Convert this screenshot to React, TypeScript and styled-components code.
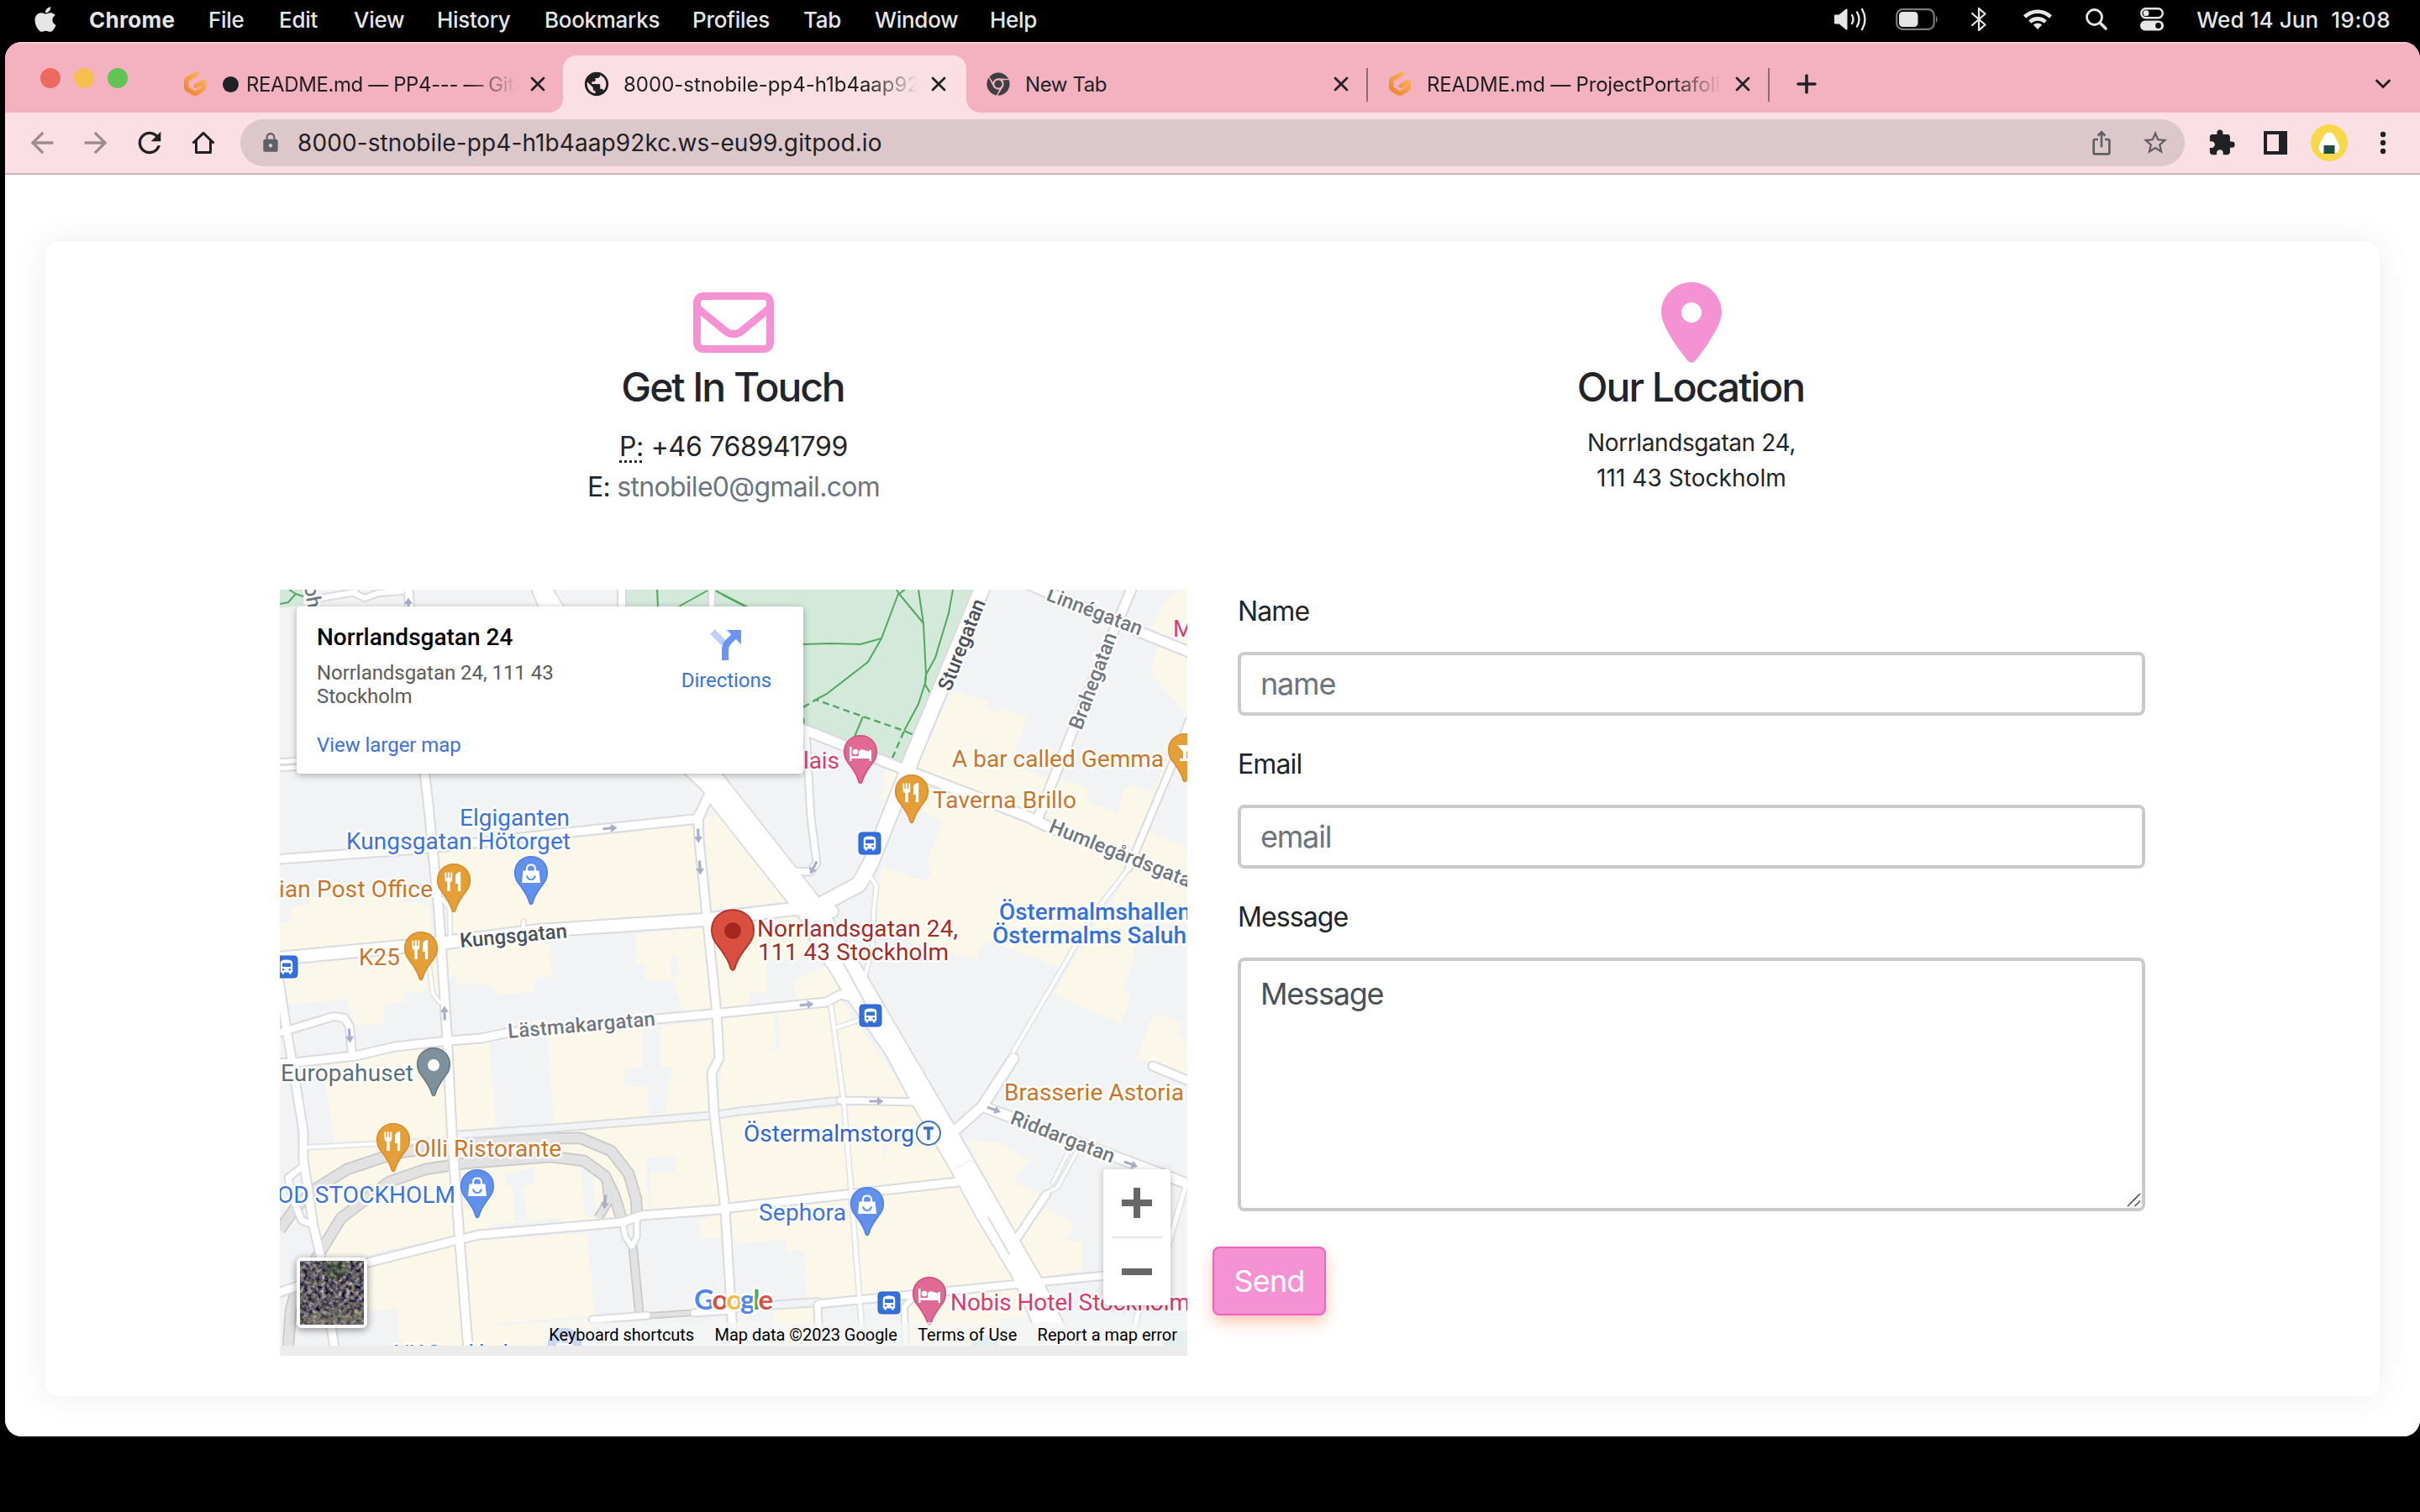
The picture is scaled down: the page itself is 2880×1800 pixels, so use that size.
import React from "react";
import styled, { createGlobalStyle } from "styled-components";
import { FaApple, FaChrome } from "react-icons/fa";
import { FaLocationDot, FaRegEnvelope } from "react-icons/fa6";
import {
  MdArrowBack,
  MdArrowForward,
  MdExtension,
  MdIosShare,
  MdLock,
  MdPublic,
  MdRefresh,
  MdStarBorder,
} from "react-icons/md";

const GlobalStyle = createGlobalStyle`
  *, *::before, *::after { box-sizing: border-box; }
  html, body { margin: 0; background: #000; }
  body { width: 2880px; height: 1800px; overflow: hidden; font-family: Inter, "Liberation Sans", sans-serif; color: #212529; }
  h2, p, address { margin: 0; font-style: normal; }
`;

/* ---------- menu bar ---------- */

const MenuBar = styled.header`
  display: flex;
  align-items: center;
  height: 50px;
  padding: 0 35px 4px 37px;
  color: #e6e6e6;
  font-size: 26px;
  font-weight: 500;
  letter-spacing: -0.3px;
  white-space: nowrap;
`;

const AppleMark = styled.span`
  display: flex;
  width: 69px;
`;

const MenuItem = styled.span<{ $w: number; $bold?: boolean }>`
  width: ${(p) => p.$w}px;
  font-weight: ${(p) => (p.$bold ? 700 : 500)};
  letter-spacing: ${(p) => (p.$bold ? "0.3px" : "-0.3px")};
`;

const StatusArea = styled.div`
  display: flex;
  align-items: center;
  margin-left: auto;
`;

const StatusSlot = styled.span<{ $w: number }>`
  display: flex;
  justify-content: center;
  width: ${(p) => p.$w}px;
`;

const Clock = styled.span`
  display: flex;
  gap: 15px;
  margin-left: 13px;
  letter-spacing: 0.1px;
`;

const Time = styled.span`
  letter-spacing: 0.5px;
`;

/* ---------- browser window ---------- */

const BrowserWindow = styled.section`
  margin-left: 6px;
  height: 1660px;
  display: flex;
  flex-direction: column;
  border-radius: 20px;
  overflow: hidden;
  background: #fff;
`;

const TabStrip = styled.div`
  display: flex;
  align-items: flex-end;
  height: 84px;
  background: #f4b1bf;
  box-shadow: inset 0 2px 0 #f8cdd5;
`;

const TrafficLights = styled.div`
  display: flex;
  gap: 16px;
  align-self: center;
  width: 188px;
  padding: 2px 0 0 42px;
`;

const Light = styled.span<{ $color: string }>`
  width: 24px;
  height: 24px;
  border-radius: 50%;
  background: ${(p) => p.$color};
`;

const Tab = styled.div<{ $active?: boolean; $w: number }>`
  position: relative;
  display: flex;
  align-items: center;
  width: ${(p) => p.$w}px;
  height: 68px;
  padding: ${(p) => (p.$active ? "0 24px 0 26px" : "0 21px 0 24px")};
  color: #202124;
  font-size: 24px;
  border-radius: 16px 16px 0 0;
  background: ${(p) => (p.$active ? "#fae0e5" : "transparent")};

  &::before,
  &::after {
    content: "";
    display: ${(p) => (p.$active ? "block" : "none")};
    position: absolute;
    bottom: 0;
    width: 16px;
    height: 16px;
  }
  &::before {
    left: -16px;
    background: radial-gradient(circle at 0 0, transparent 15.5px, #fae0e5 16px);
  }
  &::after {
    right: -16px;
    background: radial-gradient(circle at 100% 0, transparent 15.5px, #fae0e5 16px);
  }
`;

const TabIcon = styled.span`
  display: flex;
  justify-content: center;
  flex: none;
  width: 28px;
  margin-right: 18px;
`;

const TabTitle = styled.span<{ $fade?: boolean; $ls: number }>`
  display: flex;
  align-items: center;
  flex: 1;
  overflow: hidden;
  white-space: pre;
  letter-spacing: ${(p) => p.$ls}px;
  mask-image: ${(p) => (p.$fade ? "linear-gradient(90deg, #000 calc(100% - 58px), transparent 100%)" : "none")};
`;

const UnsavedDot = styled.i`
  flex: none;
  width: 19px;
  height: 19px;
  margin: 0 9px 0 1px;
  border-radius: 50%;
  background: #202124;
`;

const CloseSlot = styled.span`
  display: flex;
  flex: none;
  margin-left: 16px;
`;

const TabDivider = styled.span`
  flex: none;
  align-self: flex-end;
  width: 2px;
  height: 40px;
  margin-bottom: 13px;
  background: #8f6a72;
`;

const StripButton = styled.span<{ $w: number; $push?: boolean }>`
  display: flex;
  align-items: center;
  justify-content: center;
  width: ${(p) => p.$w}px;
  height: 68px;
  margin-left: ${(p) => (p.$push ? "auto" : "0")};
`;

const Toolbar = styled.div`
  display: flex;
  align-items: center;
  height: 74px;
  padding: 0 12px 0 12px;
  background: #fae0e5;
  border-bottom: 2px solid #cdb5ba;
  color: #202124;
`;

const ToolButton = styled.span<{ $muted?: boolean }>`
  display: flex;
  align-items: center;
  justify-content: center;
  width: 64px;
  flex: none;
  color: ${(p) => (p.$muted ? "#9c8c90" : "#202124")};
`;

const Omnibox = styled.div`
  display: flex;
  align-items: center;
  flex: 1;
  height: 56px;
  margin: 0 12px;
  padding: 0 18px 0 23px;
  border-radius: 28px;
  background: #dcc8cb;
  color: #5f6064;
`;

const Address = styled.span`
  flex: 1;
  margin-left: 19px;
  color: #202124;
  font-size: 28px;
  letter-spacing: 0.1px;
`;

const OmniAction = styled.span`
  display: flex;
  margin-left: 31px;
`;

const SidePanelGlyph = styled.i`
  width: 28px;
  height: 28px;
  border: 4px solid #202124;
  border-right-width: 10px;
`;

const Avatar = styled.span`
  display: flex;
  align-items: center;
  justify-content: center;
  width: 44px;
  height: 44px;
  border-radius: 50%;
  background: #f8d849;
`;

/* ---------- page ---------- */

const Viewport = styled.main`
  flex: 1;
  padding: 80px 48px 48px;
  background: #fff;
`;

const ContactCard = styled.div`
  height: 1374px;
  padding: 48px 279px 0;
  border-radius: 16px;
  background: #fff;
  box-shadow: 0 0 40px rgba(0, 0, 0, 0.08);
`;

const Columns = styled.div`
  display: grid;
  grid-template-columns: 1080px 1080px;
  gap: 60px;
`;

const InfoBlock = styled.div`
  display: flex;
  flex-direction: column;
  align-items: center;
  height: 366px;
  text-align: center;

  & > svg {
    color: #f592d4;
  }
`;

const BlockTitle = styled.h2`
  margin-bottom: 16px;
  padding-right: 2px;
  font-size: 48px;
  font-weight: 550;
  line-height: 58px;
  letter-spacing: -2.05px;
`;

const ContactLines = styled.div`
  padding-top: 1.6px;
`;

const ContactLine = styled.p<{ $ls: number }>`
  font-size: 32px;
  line-height: 48px;
  letter-spacing: ${(p) => p.$ls}px;
`;

const PhoneAbbr = styled.abbr`
  text-decoration: none;
  background: repeating-linear-gradient(90deg, #212529 0 3px, transparent 3px 6px) 0 100% / 100% 3px no-repeat;
`;

const Mail = styled.span`
  color: #6c757d;
`;

const AddressLine = styled.address<{ $ls: number }>`
  font-size: 28px;
  line-height: 42px;
  letter-spacing: ${(p) => p.$ls}px;
`;

/* ---------- map ---------- */

const MapFrame = styled.div`
  position: relative;
  width: 1080px;
  height: 912px;
  border-bottom: 12px solid #ececec;
  overflow: hidden;
  font-family: Roboto, "Liberation Sans", sans-serif;
`;

const MapCanvas = styled.svg`
  display: block;
`;

const PlaceCard = styled.div`
  position: absolute;
  left: 20px;
  top: 20px;
  display: flex;
  justify-content: space-between;
  width: 603px;
  height: 199px;
  padding: 19px 38px 0 24px;
  border-radius: 4px;
  background: #fff;
  box-shadow: 0 2px 8px rgba(0, 0, 0, 0.3);
  font-size: 24px;
`;

const PlaceName = styled.p`
  color: #000;
  font-size: 28px;
  font-weight: 500;
  line-height: 36px;
`;

const PlaceAddress = styled.p`
  width: 300px;
  margin-top: 10px;
  color: #5b5b5b;
  line-height: 28px;
  letter-spacing: -0.05px;
`;

const MapLink = styled.p<{ $gap: number }>`
  margin-top: ${(p) => p.$gap}px;
  color: #3a72df;
  line-height: 28px;
  letter-spacing: -0.05px;
`;

const DirectionsBox = styled.div`
  display: flex;
  flex-direction: column;
  align-items: center;
  padding-top: 7px;
`;

const ZoomControl = styled.div`
  position: absolute;
  left: 980px;
  top: 690px;
  display: flex;
  flex-direction: column;
  align-items: center;
  width: 80px;
  height: 162px;
  border-radius: 4px;
  background: #fff;
  box-shadow: 0 2px 8px rgba(0, 0, 0, 0.25);
`;

const ZoomButton = styled.span`
  display: flex;
  flex: 1;
  align-items: center;
  justify-content: center;
`;

const ZoomRule = styled.i`
  width: 60px;
  height: 2px;
  background: #e6e6e6;
`;

const SatelliteToggle = styled.div`
  position: absolute;
  left: 20px;
  top: 795px;
  width: 84px;
  height: 84px;
  border: 4px solid #fff;
  border-radius: 6px;
  overflow: hidden;
  background: #5c5a60;
  box-shadow: 0 2px 10px rgba(0, 0, 0, 0.45);
`;

const MapFooter = styled.div`
  position: absolute;
  right: 0;
  bottom: 0;
  display: flex;
  gap: 24.4px;
  height: 28px;
  padding: 0 12px 0 8px;
  background: rgba(245, 245, 245, 0.7);
  color: #000;
  font-size: 20px;
  line-height: 31px;
  letter-spacing: -0.03px;
  white-space: nowrap;
`;

/* ---------- form ---------- */

const Form = styled.form`
  display: flex;
  flex-direction: column;
  align-items: flex-start;
`;

const Label = styled.label`
  margin-bottom: 24.5px;
  padding-top: 1.5px;
  font-size: 32px;
  line-height: 48px;
  letter-spacing: -0.9px;
`;

const TextField = styled.input`
  width: 100%;
  height: 76px;
  margin-bottom: 32px;
  padding: 0 23px;
  border: 4px solid #cacaca;
  border-radius: 8px;
  background: #fff;
  font: 400 36px Inter, "Liberation Sans", sans-serif;
  letter-spacing: -1.2px;
  &::placeholder {
    color: #6c757d;
    opacity: 1;
  }
`;

const AreaWrap = styled.div`
  position: relative;
  width: 100%;
  height: 302px;
  margin-bottom: 42px;
`;

const MessageField = styled.textarea`
  display: block;
  width: 100%;
  height: 100%;
  padding: 12px 23px;
  border: 4px solid #cacaca;
  border-radius: 8px;
  background: #fff;
  resize: none;
  font: 400 36px/54px Inter, "Liberation Sans", sans-serif;
  letter-spacing: -1.2px;
  &::placeholder {
    color: #495057;
    opacity: 1;
  }
`;

const ResizeGrip = styled.svg`
  position: absolute;
  right: 4px;
  bottom: 4px;
`;

const SendButton = styled.button`
  width: 135px;
  height: 82px;
  margin-left: -30px;
  padding: 0;
  border: 2px solid #f160c3;
  border-radius: 8px;
  background: #f592d4;
  box-shadow: 0 8px 18px rgba(240, 125, 80, 0.42);
  color: #fff;
  font: 400 36px Inter, "Liberation Sans", sans-serif;
  letter-spacing: -0.9px;
`;

/* ---------- chrome glyphs ---------- */

const CloseGlyph = () => (
  <svg width="18" height="18" viewBox="0 0 18 18" stroke="#202124" strokeWidth="2.8" strokeLinecap="round">
    <path d="M2 2 16 16M16 2 2 16" />
  </svg>
);

const GitpodGlyph = () => (
  <svg width="30" height="34" viewBox="0 0 30 34" fill="none">
    <defs>
      <linearGradient id="gp" x1="1" y1="0" x2="0.2" y2="1">
        <stop offset="0" stopColor="#f6b863" />
        <stop offset="1" stopColor="#ee8733" />
      </linearGradient>
    </defs>
    <path
      d="M17.5 4 5.8 10.3Q4 11.4 4 13.3V21Q4 23 5.8 24L13.4 28.5Q15 29.4 16.6 28.5L24.2 24Q26 23 26 21V14L16.5 19.5"
      stroke="url(#gp)"
      strokeWidth="6"
      strokeLinecap="round"
      strokeLinejoin="round"
    />
  </svg>
);

const HomeGlyph = () => (
  <svg width="30" height="30" viewBox="0 0 30 30" fill="none" stroke="#202124" strokeWidth="3">
    <path d="M2.5 15.5 15 3.4 27.500 15.5M6.500 12.500V26.500H23.500V12.500" strokeLinejoin="round" />
  </svg>
);

const VolumeGlyph = () => (
  <svg width="40" height="30" viewBox="0 0 40 30" fill="none" stroke="#e6e6e6" strokeWidth="2.4" strokeLinecap="round">
    <path d="M2 10.500H7L15.500 3.500V26.500L7 19.500H2Z" fill="#e6e6e6" stroke="#e6e6e6" strokeLinejoin="round" strokeWidth="2" />
    <path d="M22 10Q25 15 22 20M28 6.500Q33 15 28 23.500M34 3Q41 15 34 27" />
  </svg>
);

const BatteryGlyph = () => (
  <svg width="52" height="26" viewBox="0 0 52 26" fill="none">
    <rect x="1.200" y="1.200" width="44.500" height="23.600" rx="7" stroke="#7c7c7c" strokeWidth="2.200" />
    <rect x="4" y="4" width="22.500" height="18" rx="4.500" fill="#e6e6e6" />
    <path d="M48 8.500Q51.500 13 48 17.500Z" fill="#7c7c7c" />
  </svg>
);

const BluetoothGlyph = () => (
  <svg width="20" height="30" viewBox="0 0 20 30" fill="none" stroke="#e6e6e6" strokeWidth="2.300" strokeLinejoin="round" strokeLinecap="round">
    <path d="M2 8 17.500 21.500 10 28V2L17.500 8.500 2 22" />
  </svg>
);

const WifiGlyph = () => (
  <svg width="36" height="26" viewBox="0 0 36 26" fill="none" stroke="#e6e6e6" strokeWidth="4.600">
    <path d="M2.600 10.200A21.500 21.500 0 0 1 33.400 10.200" />
    <path d="M8.800 16.200A13 13 0 0 1 27.200 16.200" />
    <path d="M18 25 12.800 19.600Q18 15.400 23.200 19.600Z" fill="#e6e6e6" stroke="none" />
  </svg>
);

const SearchGlyph = () => (
  <svg width="28" height="28" viewBox="0 0 28 28" fill="none" stroke="#e6e6e6" strokeWidth="2.800" strokeLinecap="round">
    <circle cx="11.500" cy="11.500" r="9" />
    <path d="M18.300 18.300 25 25" strokeWidth="3.600" />
  </svg>
);

const ControlCentreGlyph = () => (
  <svg width="30" height="28" viewBox="0 0 30 28" fill="none">
    <rect x="2.200" y="1.200" width="25.600" height="11" rx="5.500" stroke="#e6e6e6" strokeWidth="2.400" />
    <circle cx="8" cy="6.700" r="3.400" fill="#e6e6e6" />
    <rect x="1" y="15.500" width="28" height="12" rx="6" fill="#e6e6e6" />
    <circle cx="22.500" cy="21.500" r="3.400" fill="#000" />
  </svg>
);

/* ---------- map data ---------- */

const YELLOW = "#fcf8e9";

const blocks = [
  "M521 1010 826 983 838 1085 536 1113Z",
  "M333 1100 345 1097 347 1080 370 1076 370 1068 412 1067 416 1076 430 1067 470 1064 478 1072 511 1078 513 1120 333 1135Z",
  "M838 973 856 970 937 1073 847 1082Z",
  "M334 1150 523 1132 525 1190 508 1180 482 1180 481 1192 457 1195 456 1218 423 1221 413 1189 341 1196Z",
  "M531 1128 654 1121 656 1163 636 1165 636 1180 595 1185 584 1172 543 1170 543 1161 532 1163Z",
  "M756 1113 837 1103 850 1203 813 1205 800 1165 768 1169 766 1148 758 1148Z",
  "M845 1100 945 1090 972 1140 911 1143 913 1182 891 1182 891 1200 853 1203Z",
  "M944 1168 984 1150 1004 1183 948 1194Z",
  "M582 1240 538 1243 543 1353 591 1345Z",
  "M652 1233 852 1215 846 1325 659 1338Z",
  "M860 1213 1000 1190 1083 1307 856 1325Z",
  "M852 1330 1088 1312 1138 1402 866 1436Z",
  "M868 1442 1148 1408 1209 1526 960 1548 957 1487 936 1490 935 1475 874 1481Z",
  "M1080 1545 1215 1533 1226 1567 1192 1570 1192 1602 1080 1602Z",
  "M920 1560 976 1553 976 1602 920 1602Z",
  "M352 1270 527 1245 538 1353 398 1360 388 1293 386 1268Z",
  "M366 1370 846 1332 858 1436 550 1470 382 1504 361 1380Z",
  "M384 1512 541 1480 554 1602 475 1602 473 1558 395 1562Z",
  "M554 1478 698 1468 708 1567 700 1602 563 1602Z",
  "M832 1452 857 1446 860 1473 834 1475Z",
  "M1134 822 1176 835 1175 843 1192 850 1194 843 1223 853 1202 912 1250 925 1237 970 1223 968 1090 913Z",
  "M1092 930 1223 982 1347 1030 1263 1153 1223 1137 1173 1120 1162 1142 1043 1110 1045 1050 1051 1032 1103 1050 1109 1033 1103 1027 1122 977 1090 960Z",
  "M1054 915 1078 923 1060 955 1048 950Z",
  "M1368 990 1413 1010 1413 1100 1310 1100 1343 1035Z",
  "M1310 1090 1355 1110 1349 1140 1336 1180 1346 1185 1334 1219 1253 1183Z",
  "M1380 1208 1407 1218 1402 1233 1413 1238 1413 1280 1353 1260 1371 1210Z",
  "M1398 707 1413 700 1413 768 1370 748 1389 712Z",
  "M1380 763 1413 777 1413 853 1343 1028 1245 975 1258 928 1296 938 1293 953 1329 968 1340 935 1372 942 1413 850 1372 806 1371 795Z",
  "M1151 1358 1189 1360 1227 1383 1207 1400 1213 1410 1238 1423 1210 1470Z",
  "M1245 1437 1278 1457 1269 1477 1287 1477 1289 1512 1238 1520 1212 1475Z",
];

const yards = [
  "M765 1223 786 1221 786 1270 799 1270 799 1285 795 1285 793 1325 773 1327 770 1293 743 1293 743 1272 765 1270Z",
  "M602 1397 636 1390 636 1410 622 1412 627 1453 613 1453 610 1413 602 1410Z",
  "M768 1378 804 1375 804 1394 774 1397 776 1438 772 1438Z",
  "M691 1388 716 1384 718 1398 704 1404 712 1448 696 1450Z",
  "M921 1205 927 1205 929 1250 916 1251 922 1246Z",
  "M798 1138 806 1137 808 1160 798 1162Z",
  "M585 1458 660 1450 670 1455 580 1465Z",
  "M1050 1362 1057 1362 1055 1376 1051 1376Z",
  "M594 1575 700 1567 700 1570 594 1578Z",
];

const parkPaths = [
  "M860 708 887 722",
  "M956 767 987 766 1024 767 1049 760 1069 707",
  "M1049 760 1033 788 984 826 969 834",
  "M1067 702 1070 707 1099 742",
  "M1070 707 1077 702",
  "M1093 702 1099 742 1102 803 1101 815 1107 825 1111 828",
  "M1134 702 1129 730 1113 783 1102 803 1101 813 1093 838 1076 870",
  "M1076 870 1090 876",
  "M1027 853 1017 877",
  "M782 702 783 722",
  "M842 703 808 722",
  "M851 703 890 723",
  "M333 719 343 717 352 707 344 702",
  "M352 707 361 710",
  "M956 855 957 862",
];

type Road = { d: string; w: number; soft?: boolean };

const tunnels: Road[] = [
  { d: "M333 1464 350 1440 373 1417 413 1392 470 1373 548 1362 659 1355 691 1355 727 1370 748 1397 757 1427 758 1445", w: 11 },
  { d: "M366 1515 406 1450 463 1407 506 1392 552 1385 656 1377 695 1382 720 1400 731 1423 740 1452", w: 11 },
  { d: "M722 1410 724 1430 712 1450", w: 8 },
  { d: "M753 1483 761 1565", w: 8 },
  { d: "M343 1602 346 1560 354 1530", w: 11 },
  { d: "M761 1567 822 1563", w: 5 },
];

const roads: Road[] = [
  { d: "M503 900 510 960 522 1083 526 1140 532 1233 538 1353 547 1477 557 1604", w: 9.500 },
  { d: "M331 1023 509 1010 677 991 829 975 840 955", w: 9.500 },
  { d: "M841 950 831 977 832 1000 841 1090 847 1147 853 1207 856 1260 847 1277 850 1327 863 1440 873 1604", w: 9 },
  { d: "M331 1141 531 1122 641 1108 838 1095 944 1082 990 1085", w: 14 },
  { d: "M960 1086 1022 1053 1036 1028 1078 923 1085 903 1169 700", w: 17 },
  { d: "M940 862 1074 915 1223 972 1245 983 1415 1052", w: 11 },
  { d: "M959 870 965 973 972 1027 964 1038 947 1037", w: 7 },
  { d: "M1220 694 1358 753 1415 776", w: 11 },
  { d: "M1347 700 1290 836 1236 972", w: 10 },
  { d: "M1415 858 1398 903 1343 1034", w: 7 },
  { d: "M1343 1034 1300 1090 1260 1160 1206 1252", w: 4, soft: true },
  { d: "M1206 1260 1169 1317 1132 1350", w: 11 },
  { d: "M1169 1317 1290 1363 1415 1410", w: 11 },
  { d: "M1209 1476 1245 1422", w: 8 },
  { d: "M1245 1420 1258 1414 1282 1370M1253 1408 1272 1370", w: 3.500, soft: true },
  { d: "M350 1265 423 1257 470 1246 534 1239 573 1236 606 1229 781 1213 848 1207 983 1193 1000 1184 1012 1187", w: 9 },
  { d: "M331 1160 340 1220 347 1260 361 1347 361 1380 373 1460 381 1493 398 1604", w: 9 },
  { d: "M331 1230 397 1210 410 1212 416 1222 419 1256", w: 8 },
  { d: "M331 1264 350 1264", w: 6 },
  { d: "M361 1366 540 1357", w: 4, soft: true },
  { d: "M1000 1310 1090 1312", w: 7 },
  { d: "M331 1539 438 1503 541 1477 570 1470 741 1455 763 1447 856 1440 867 1438 1140 1407", w: 9 },
  { d: "M989 1198 1004 1310 1013 1418 1025 1573 1026 1604", w: 4.500, soft: true },
  { d: "M993 1224 1026 1213", w: 4, soft: true },
  { d: "M976 1552 1209 1529 1330 1517", w: 8 },
  { d: "M973 1553 975 1604", w: 7 },
  { d: "M1085 1546 1076 1556 1078 1604", w: 6 },
  { d: "M705 1571 770 1566", w: 7 },
  { d: "M826 1563 870 1560", w: 7 },
  { d: "M741 1455 744 1472 752 1484 758 1472 758 1450", w: 5.500 },
  { d: "M360 1389 343 1402 347 1423 359 1453 373 1458", w: 7 },
  { d: "M526 1070 535 1082 536 1116", w: 3.500, soft: true },
  { d: "M623 1097 623 1108", w: 4, soft: true },
  { d: "M511 1150 515 1183 524 1194", w: 3.500, soft: true },
  { d: "M1035 1042 1043 1055 1040 1083 1038 1130 1030 1160", w: 4, soft: true },
  { d: "M381 712 423 705M423 707 434 712 450 706 478 704", w: 6 },
  { d: "M486 700 488 730", w: 9 },
  { d: "M740 700 740 730", w: 8 },
  { d: "M847 700 847 730", w: 6 },
  { d: "M331 907 360 905M331 915 360 913", w: 5 },
  { d: "M1372 1269 1415 1287", w: 9 },
  { d: "M1410 1415 1385 1500M1355 1560 1345 1604", w: 5, soft: true },
];

const greyRoads: Road[] = [
  { d: "M545 1351 659 1343 845 1328 880 1323 1002 1310", w: 7 },
  { d: "M870 1557 976 1550", w: 8 },
];

const BOULEVARD =
  "M628 690 645 730 816 921 836 940 845 956 860 975 937 1073 951 1090 969 1127 991 1160 1004 1182 1056 1257 1082 1307 1136 1400 1162 1448 1207 1523 1242 1606 1284 1606 1264 1573 1238 1520 1209 1470 1134 1338 1020 1143 983 1082 973 1067 938 1022 860 923 836 880 672 725 650 690Z";

const arrows: [number, number, number][] = [
  [726, 986, -5],
  [831, 995, 88],
  [833, 1033, 86],
  [968, 1033, 118],
  [529, 1206, -92],
  [416, 1233, 86],
  [720, 1431, 96],
  [960, 1196, -6],
  [1043, 1311, 0],
  [1183, 1321, 20],
  [1346, 1386, 20],
  [486, 720, -90],
];

type PinKind = "food" | "shop" | "hotel" | "place" | "bar";

const pinColors: Record<PinKind, [string, string]> = {
  food: ["#e49f37", "#d98a2f"],
  bar: ["#e49f37", "#d98a2f"],
  shop: ["#6290ed", "#4f80e2"],
  hotel: ["#df6a94", "#d64c7c"],
  place: ["#7e909c", "#647985"],
};

const pins: [PinKind, number, number][] = [
  ["food", 540, 1028],
  ["food", 501, 1109],
  ["food", 1085, 922],
  ["food", 468, 1337],
  ["bar", 1410, 873],
  ["shop", 632, 1019],
  ["shop", 568, 1392],
  ["shop", 1032, 1413],
  ["shop", 672, 1581],
  ["hotel", 1024, 875],
  ["hotel", 1106, 1520],
  ["place", 516, 1247],
];

const stops: [number, number][] = [
  [1022, 991],
  [1023, 1196],
  [1045, 1538],
  [328, 1138],
];

type MapLabel = { t: string; x: number; y: number; w?: number; c: string; end?: boolean; b?: boolean };

const BLUE = "#3a72df";
const ORANGE = "#cb7427";
const ROSE = "#da3b6c";

const labels: MapLabel[] = [
  { t: "Elgiganten", x: 547, y: 983, w: 131, c: BLUE },
  { t: "Kungsgatan Hötorget", x: 412, y: 1011, w: 267, c: BLUE },
  { t: "ian Post Office", x: 515, y: 1067.500, w: 183, c: ORANGE, end: true },
  { t: "K25", x: 427, y: 1149, w: 49, c: ORANGE },
  { t: "Norrlandsgatan 24,", x: 901, y: 1114.500, w: 239, c: "#a52a24" },
  { t: "111 43 Stockholm", x: 902, y: 1142.500, w: 227, c: "#a52a24" },
  { t: "Taverna Brillo", x: 1110, y: 961.500, w: 171, c: ORANGE },
  { t: "A bar called Gemma", x: 1133, y: 912.500, w: 252, c: ORANGE },
  { t: "lais", x: 956, y: 914.500, w: 43, c: ROSE },
  { t: "M", x: 1396, y: 757.500, c: ROSE },
  { t: "Östermalmshallen", x: 1189, y: 1094.500, w: 228, c: "#3370de", b: true },
  { t: "Östermalms Saluh", x: 1181, y: 1122.500, w: 231, c: "#3370de", b: true },
  { t: "Europahuset", x: 334, y: 1287, w: 158, c: "#5b6f7b" },
  { t: "Olli Ristorante", x: 493, y: 1377, w: 175, c: ORANGE },
  { t: "OD STOCKHOLM", x: 542, y: 1432, w: 212, c: BLUE, end: true },
  { t: "Östermalmstorg", x: 885, y: 1358.500, w: 203, c: "#2e66cd" },
  { t: "Sephora", x: 903, y: 1452.500, w: 104, c: BLUE },
  { t: "Brasserie Astoria", x: 1195, y: 1309.500, w: 214, c: ORANGE },
  { t: "Nobis Hotel Stockholm", x: 1131, y: 1559.500, w: 285, c: ROSE },
  { t: "NK Stockholm", x: 468, y: 1620.500, w: 160, c: BLUE },
];

type StreetName = { t: string; x: number; y: number; a: number; w?: number; c: string };

const streetNames: StreetName[] = [
  { t: "Kungsgatan", x: 548, y: 1128, a: -5.300, w: 128, c: "#4b5058" },
  { t: "Sturegatan", x: 1131, y: 824, a: -68.500, w: 115, c: "#4b5058" },
  { t: "Linnégatan", x: 1244, y: 714, a: 20.900, w: 120, c: "#70777f" },
  { t: "Brahegatan", x: 1287, y: 870, a: -69.400, w: 121, c: "#70777f" },
  { t: "Humlegårdsgatan", x: 1247, y: 990, a: 21.800, w: 193, c: "#70777f" },
  { t: "Lästmakargatan", x: 605, y: 1236, a: -5, w: 176, c: "#70777f" },
  { t: "Riddargatan", x: 1201, y: 1337, a: 21.400, w: 131, c: "#70777f" },
  { t: "oh", x: 362, y: 698, a: 80, c: "#70777f" },
];

const PIN_PATH = "M0 .8C11 .8 19.300 9 19.300 20C19.300 28 15.500 32 11 38C6 45 3.200 50 2 55.500Q1.200 57.500 0 57.500Q-1.200 57.500 -2 55.500C-3.200 50 -6 45 -11 38C-15.500 32 -19.300 28 -19.300 20C-19.300 9 -11 .8 0 .8Z";

const PinGlyph = ({ kind }: { kind: PinKind }) => {
  switch (kind) {
    case "food":
      return (
        <g fill="#fff">
          <path d="M-10.500 10.500H-8.700V17H-7.200V10.500H-5.200V17H-3.700V10.500H-1.700V18.500Q-1.700 21.500 -4.300 22V33H-7.700V22Q-10.500 21.500 -10.500 18.500Z" />
          <path d="M8.200 10V33H4.900V24H2V15Q2.500 10.500 8.200 10Z" />
        </g>
      );
    case "bar":
      return <path d="M-9 14H9L2 22V30H6V33H-6V30H-2V22Z" fill="#fff" />;
    case "shop":
      return (
        <g>
          <path d="M-9.500 17.500H9.500L11 32H-11Z" fill="#fff" />
          <path d="M-5 18V15Q-4.500 10.500 0 10.500T5 15V18" fill="none" stroke="#fff" strokeWidth="2.200" />
          <path d="M-5 23.500Q-4 28 0 28T5 23.500" fill="none" stroke="#6290ed" strokeWidth="2.200" />
        </g>
      );
    case "hotel":
      return (
        <g fill="#fff">
          <path d="M-13 14H-10.500V25H10.500V18H13V31H10.500V28H-10.500V31H-13Z" />
          <circle cx="-6" cy="20" r="3.300" />
          <path d="M-2 25V20Q-1 16.500 3 17.500L11.500 20V25Z" />
        </g>
      );
    default:
      return <circle cy="21" r="7" fill="#fff" />;
  }
};

const BusStop = ({ x, y }: { x: number; y: number }) => (
  <g transform={`translate(${x} ${y})`}>
    <rect width="26" height="26" rx="4" fill="#3370dc" stroke="#2a5fc4" strokeWidth="1" />
    <path d="M5.800 8Q5.800 4.500 13 4.500T20.200 8V19.500H18.500V21.500H16V19.500H10V21.500H7.500V19.500H5.800Z" fill="#fff" />
    <path d="M8 8.500H18V13H8Z" fill="#3370dc" />
    <circle cx="9.200" cy="16.200" r="1.300" fill="#3370dc" />
    <circle cx="16.800" cy="16.200" r="1.300" fill="#3370dc" />
  </g>
);

const strokes = (list: Road[], casing: string, extra: number) =>
  list.map((r, i) => (
    <path key={i} d={r.d} stroke={casing} strokeWidth={r.w + extra} />
  ));

const StreetMap = () => (
  <MapCanvas width="1080" height="900" viewBox="333 702 1080 900">
    <rect x="333" y="702" width="1080" height="900" fill="#f1f3f4" />
    {blocks.map((d) => (
      <path key={d} d={d} fill={YELLOW} />
    ))}
    {yards.map((d) => (
      <path key={d} d={d} fill="#f1f3f4" />
    ))}
    <g fill="#d3e9d9">
      <path d="M740 702H1166L1078 912 945 860 740 780Z" />
      <path d="M333 702H362L361 720 333 724Z" />
    </g>
    <g fill="none" stroke="#55a75f" strokeWidth="2">
      {parkPaths.map((d) => (
        <path key={d} d={d} />
      ))}
      <path d="M956 842 971 833 1027 853 1076 870 1060 907" strokeDasharray="8 5" strokeWidth="2.400" />
    </g>
    <g fill="none" strokeLinejoin="round" strokeLinecap="butt">
      {strokes(tunnels, "#c9c9c9", 3.500)}
      {strokes(tunnels, "#e2e2e2", 0)}
      {strokes(greyRoads, "#dbdce0", 4)}
      {strokes(greyRoads, "#f1f3f4", 0)}
    </g>
    <g fill="none" strokeLinejoin="round" strokeLinecap="round">
      {strokes(roads.filter((r) => r.soft), "#e2e3e5", 3.500)}
      {strokes(roads.filter((r) => !r.soft), "#dadbe0", 4)}
      <path d={BOULEVARD} stroke="#dadbe0" strokeWidth="3.600" />
      {strokes(roads, "#fff", 0)}
      <path d={BOULEVARD} fill="#fff" />
      <path d="M1176 1449 1201 1493" stroke="#dadbe0" strokeWidth="2" />
      <path d="M1004 1147 1030 1195" stroke="#dadbe0" strokeWidth="2" />
      <path d="M1136 1393Q1139 1387 1146 1388Q1150 1380 1158 1383" stroke="#eeeef0" strokeWidth="1.500" />
    </g>
    <g fill="#a9adc8">
      {arrows.map(([x, y, a]) => (
        <path key={`${x}${y}`} d="M-8.500 -1.600H1V-5L8.500 0 1 5V1.600H-8.500Z" transform={`translate(${x} ${y}) rotate(${a})`} />
      ))}
    </g>
    <circle cx="1172" cy="1606" r="17" fill="#b9dde3" />
    <path d="M1386 1602Q1384 1588 1400 1585H1413V1602Z" fill="#b9dde3" />
    <g fontFamily="Roboto, 'Liberation Sans', sans-serif" stroke="#fff" strokeWidth="5" strokeLinejoin="round" style={{ paintOrder: "stroke" }}>
      {streetNames.map((s) => (
        <text key={s.t} fontSize="24" fontWeight="500" fill={s.c} textLength={s.w} transform={`translate(${s.x} ${s.y}) rotate(${s.a})`}>
          {s.t}
        </text>
      ))}
    </g>
    {stops.map(([x, y]) => (
      <BusStop key={`${x}${y}`} x={x} y={y} />
    ))}
    {pins.map(([kind, x, y]) => (
      <g key={`${x}${y}`} transform={`translate(${x} ${y})`}>
        <path d={PIN_PATH} fill={pinColors[kind][0]} stroke={pinColors[kind][1]} strokeWidth="1.600" />
        <PinGlyph kind={kind} />
      </g>
    ))}
    <g transform="translate(872 1082) scale(1.3 1.270)">
      <path d={PIN_PATH} fill="#d94f40" stroke="#b23128" strokeWidth="1.400" />
      <circle cy="20.500" r="7.700" fill="#a4281f" />
    </g>
    <g fontFamily="Roboto, 'Liberation Sans', sans-serif" fontSize="28" stroke="#fff" strokeWidth="5" strokeLinejoin="round" style={{ paintOrder: "stroke" }}>
      {labels.map((l) => (
        <text key={l.t} x={l.x} y={l.y} fill={l.c} textLength={l.w} textAnchor={l.end ? "end" : "start"} fontWeight={l.b ? 500 : 400}>
          {l.t}
        </text>
      ))}
      <text x="826" y="1559" textLength="94" fontFamily="Lato, sans-serif" fontSize="33" fontWeight="700">
        <tspan fill="#5087ec">G</tspan>
        <tspan fill="#d95040">o</tspan>
        <tspan fill="#f2bd42">o</tspan>
        <tspan fill="#5087ec">g</tspan>
        <tspan fill="#58a55c">l</tspan>
        <tspan fill="#d95040">e</tspan>
      </text>
    </g>
    <circle cx="1105" cy="1349" r="14" fill="#fff" stroke="#3b74bd" strokeWidth="2" />
    <path d="M1099 1343H1111M1105 1343V1357" stroke="#3b74bd" strokeWidth="3.600" />
  </MapCanvas>
);

const MapPanel = () => (
  <MapFrame>
    <StreetMap />
    <PlaceCard>
      <div>
        <PlaceName>Norrlandsgatan 24</PlaceName>
        <PlaceAddress>Norrlandsgatan 24, 111 43 Stockholm</PlaceAddress>
        <MapLink $gap={30}>View larger map</MapLink>
      </div>
      <DirectionsBox>
        <svg width="38" height="38" viewBox="0 0 38 38" fill="none">
          <path d="M3 4 17 18" stroke="#bcd0fb" strokeWidth="8" />
          <path d="M18 38V26Q18 20 22 16L29 9" stroke="#6b94f5" strokeWidth="8" />
          <path d="M20 2H37V19Z" fill="#6b94f5" />
        </svg>
        <MapLink $gap={10}>Directions</MapLink>
      </DirectionsBox>
    </PlaceCard>
    <SatelliteToggle>
      <svg width="76" height="76">
        <defs>
          <filter id="aerial" x="0" y="0" width="100%" height="100%" colorInterpolationFilters="sRGB">
            <feTurbulence type="fractalNoise" baseFrequency="0.2" numOctaves="4" seed="7" />
            <feColorMatrix values="1.1 0.5 0 0 -0.42  1.0 0.6 0 0 -0.44  0.8 0.4 0.4 0 -0.41  0 0 0 0 1" />
          </filter>
        </defs>
        <rect width="76" height="76" filter="url(#aerial)" />
        <ellipse cx="42" cy="10" rx="13" ry="12" fill="#2f4a24" opacity="0.4" />
        <path d="M0 66 30 60 76 58V76H0Z" fill="#8a8a68" opacity="0.3" />
      </svg>
    </SatelliteToggle>
    <ZoomControl>
      <ZoomButton>
        <svg width="36" height="36" viewBox="0 0 36 36" stroke="#666" strokeWidth="8">
          <path d="M0 18H36M18 0V36" />
        </svg>
      </ZoomButton>
      <ZoomRule />
      <ZoomButton>
        <svg width="36" height="36" viewBox="0 0 36 36" stroke="#666" strokeWidth="8">
          <path d="M0 18H36" />
        </svg>
      </ZoomButton>
    </ZoomControl>
    <MapFooter>
      <span>Keyboard shortcuts</span>
      <span>Map data ©2023 Google</span>
      <span>Terms of Use</span>
      <span>Report a map error</span>
    </MapFooter>
  </MapFrame>
);

const menus: [string, number][] = [
  ["File", 84],
  ["Edit", 89],
  ["View", 99],
  ["History", 128],
  ["Bookmarks", 176],
  ["Profiles", 132],
  ["Tab", 85],
  ["Window", 137],
  ["Help", 60],
];

export default function App() {
  return (
    <>
      <GlobalStyle />
      <MenuBar>
        <AppleMark>
          <FaApple size={34} />
        </AppleMark>
        <MenuItem $w={142} $bold>
          Chrome
        </MenuItem>
        {menus.map(([name, w]) => (
          <MenuItem key={name} $w={w}>
            {name}
          </MenuItem>
        ))}
        <StatusArea>
          <StatusSlot $w={66}>
            <VolumeGlyph />
          </StatusSlot>
          <StatusSlot $w={94}>
            <BatteryGlyph />
          </StatusSlot>
          <StatusSlot $w={52}>
            <BluetoothGlyph />
          </StatusSlot>
          <StatusSlot $w={88}>
            <WifiGlyph />
          </StatusSlot>
          <StatusSlot $w={52}>
            <SearchGlyph />
          </StatusSlot>
          <StatusSlot $w={80}>
            <ControlCentreGlyph />
          </StatusSlot>
          <Clock>
            <span>Wed 14 Jun</span>
            <Time>19:08</Time>
          </Clock>
        </StatusArea>
      </MenuBar>

      <BrowserWindow>
        <TabStrip>
          <TrafficLights>
            <Light $color="#ed6a5e" />
            <Light $color="#f4bf4f" />
            <Light $color="#61c554" />
          </TrafficLights>
          <Tab $w={476}>
            <TabIcon>
              <GitpodGlyph />
            </TabIcon>
            <TabTitle $fade $ls={-0.400}>
              <UnsavedDot />
              README.md — PP4--- — Gitpod
            </TabTitle>
            <CloseSlot>
              <CloseGlyph />
            </CloseSlot>
          </Tab>
          <Tab $w={480} $active>
            <TabIcon>
              <MdPublic size={34} style={{ flex: "none" }} />
            </TabIcon>
            <TabTitle $fade $ls={0}>
              8000-stnobile-pp4-h1b4aap92kc
            </TabTitle>
            <CloseSlot>
              <CloseGlyph />
            </CloseSlot>
          </Tab>
          <Tab $w={476}>
            <TabIcon>
              <FaChrome size={28} color="#3c4043" />
            </TabIcon>
            <TabTitle $ls={-0.400}>New Tab</TabTitle>
            <CloseSlot>
              <CloseGlyph />
            </CloseSlot>
          </Tab>
          <TabDivider />
          <Tab $w={476}>
            <TabIcon>
              <GitpodGlyph />
            </TabIcon>
            <TabTitle $fade $ls={-0.200}>
              README.md — ProjectPortafolio
            </TabTitle>
            <CloseSlot>
              <CloseGlyph />
            </CloseSlot>
          </Tab>
          <TabDivider />
          <StripButton $w={88}>
            <svg width="24" height="24" viewBox="0 0 24 24" stroke="#202124" strokeWidth="3.600" strokeLinecap="round">
              <path d="M2 12H22M12 2V22" />
            </svg>
          </StripButton>
          <StripButton $w={88} $push>
            <svg width="20" height="14" viewBox="0 0 20 14" fill="none" stroke="#202124" strokeWidth="3" strokeLinecap="round">
              <path d="M2.500 3 10 10.500 17.500 3" />
            </svg>
          </StripButton>
        </TabStrip>

        <Toolbar>
          <ToolButton $muted>
            <MdArrowBack size={40} />
          </ToolButton>
          <ToolButton $muted>
            <MdArrowForward size={40} />
          </ToolButton>
          <ToolButton>
            <MdRefresh size={40} />
          </ToolButton>
          <ToolButton>
            <HomeGlyph />
          </ToolButton>
          <Omnibox>
            <MdLock size={26} />
            <Address>8000-stnobile-pp4-h1b4aap92kc.ws-eu99.gitpod.io</Address>
            <OmniAction>
              <MdIosShare size={32} />
            </OmniAction>
            <OmniAction>
              <MdStarBorder size={34} />
            </OmniAction>
          </Omnibox>
          <ToolButton>
            <MdExtension size={34} />
          </ToolButton>
          <ToolButton>
            <SidePanelGlyph />
          </ToolButton>
          <ToolButton>
            <Avatar>
              <svg width="28" height="28" viewBox="0 0 28 28">
                <path d="M14 1.500C19 1.500 21 7 24 13C27 19 27 22 24.500 25Q23 26.500 14 26.500T3.500 25C1 22 1 19 4 13C7 7 9 1.500 14 1.500Z" fill="#fff" />
                <rect x="7.500" y="17" width="13" height="10" fill="#1f4f43" />
              </svg>
            </Avatar>
          </ToolButton>
          <ToolButton>
            <svg width="8" height="28" viewBox="0 0 8 28" fill="#202124">
              <circle cx="4" cy="4" r="3.200" />
              <circle cx="4" cy="14" r="3.200" />
              <circle cx="4" cy="24" r="3.200" />
            </svg>
          </ToolButton>
        </Toolbar>

        <Viewport>
          <ContactCard>
            <Columns>
              <InfoBlock>
                <FaRegEnvelope size={96} />
                <BlockTitle>Get In Touch</BlockTitle>
                <ContactLines>
                  <ContactLine $ls={-0.300}>
                    <PhoneAbbr>P:</PhoneAbbr> +46 768941799
                  </ContactLine>
                  <ContactLine $ls={-0.700}>
                    E: <Mail>stnobile0@gmail.com</Mail>
                  </ContactLine>
                </ContactLines>
              </InfoBlock>
              <InfoBlock>
                <FaLocationDot size={96} />
                <BlockTitle>Our Location</BlockTitle>
                <AddressLine $ls={-0.400}>Norrlandsgatan 24,</AddressLine>
                <AddressLine $ls={0.050}>111 43 Stockholm</AddressLine>
              </InfoBlock>
            </Columns>
            <Columns>
              <MapPanel />
              <Form>
                <Label htmlFor="name">Name</Label>
                <TextField id="name" placeholder="name" />
                <Label htmlFor="email">Email</Label>
                <TextField id="email" placeholder="email" />
                <Label htmlFor="message">Message</Label>
                <AreaWrap>
                  <MessageField id="message" placeholder="Message" />
                  <ResizeGrip width="18" height="18" viewBox="0 0 18 18" stroke="#555" strokeWidth="1.600">
                    <path d="M1 16 16 1M9.500 16 16 9.500" />
                  </ResizeGrip>
                </AreaWrap>
                <SendButton type="button">Send</SendButton>
              </Form>
            </Columns>
          </ContactCard>
        </Viewport>
      </BrowserWindow>
    </>
  );
}
